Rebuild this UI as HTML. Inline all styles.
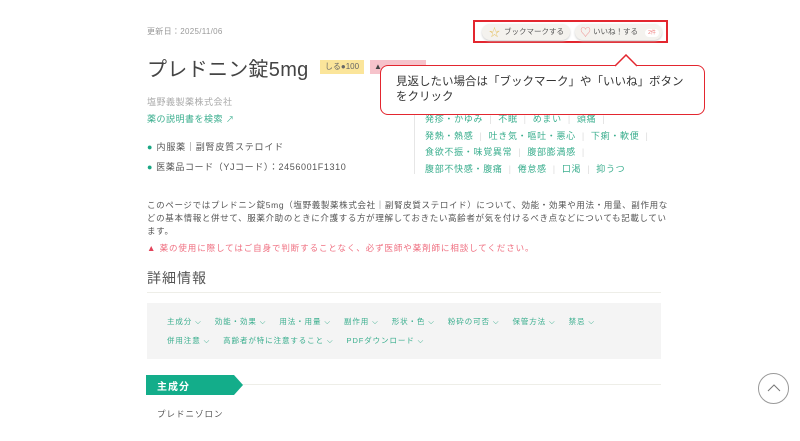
<!DOCTYPE html>
<html><head><meta charset="utf-8"><style>
*{margin:0;padding:0;box-sizing:border-box}
body{width:800px;height:441px;overflow:hidden;background:#fff;font-family:"Liberation Sans","Noto Sans CJK JP",sans-serif;color:#555;position:relative}
.a{position:absolute;white-space:nowrap}
.g{color:#3aae8e}
.sep{color:#ddd;margin:0 6px}
.nav span{margin-right:13px}
</style></head><body>
<div class="a" style="left:147px;top:26px;font-size:8px;color:#999;letter-spacing:.3px">更新日：2025/11/06</div>

<div class="a" style="left:473px;top:20px;width:195px;height:23px;border:2px solid #e3262f"></div>
<div class="a" style="left:482px;top:24px;width:88px;height:16px;border-radius:8px;background:#f4f2ee;box-shadow:0 1px 2px #ccc;font-size:7.5px;line-height:16px;padding-left:22px;color:#555">ブックマークする</div>
<div class="a" style="left:489px;top:24px;font-size:11px;color:#e4c46a">☆</div>
<div class="a" style="left:575px;top:24px;width:87px;height:16px;border-radius:8px;background:#f4f2ee;box-shadow:0 1px 2px #ccc;font-size:7.5px;line-height:16px;padding-left:18px;color:#555">いいね！する <span style="display:inline-block;background:#fff;border-radius:4px;color:#e77;font-size:5px;padding:0 3px;margin-left:5px;line-height:8px">2件</span></div>
<div class="a" style="left:580px;top:24px;font-size:11px;color:#e88">♡</div>

<div class="a" style="left:147px;top:53px;font-size:20px;color:#444;letter-spacing:.3px">プレドニン錠5mg</div>
<div class="a" style="left:320px;top:60px;width:44px;height:14px;background:#fbe59a;font-size:8px;line-height:14px;text-align:center;color:#666">しる●100</div>
<div class="a" style="left:370px;top:60px;width:56px;height:14px;background:#f6c3cb;font-size:8px;line-height:14px;padding-left:4px;color:#444">▲</div>

<div class="a" style="left:147px;top:95px;font-size:9px;color:#aaa;letter-spacing:.5px">塩野義製薬株式会社</div>
<div class="a g" style="left:147px;top:112px;font-size:9px;letter-spacing:.5px">薬の説明書を検索 <span style="font-size:8px">↗</span></div>
<div class="a" style="left:147px;top:140px;font-size:9px;color:#555;letter-spacing:.8px"><span style="color:#1aa784">●</span> 内服薬｜副腎皮質ステロイド</div>
<div class="a" style="left:147px;top:160px;font-size:9px;color:#555;letter-spacing:.6px"><span style="color:#1aa784">●</span> 医薬品コード（YJコード）：2456001F1310</div>

<div class="a" style="left:414px;top:100px;width:1px;height:74px;background:#e6e6e6"></div>
<div class="a g" style="left:425px;top:111px;font-size:9px;line-height:16.5px;letter-spacing:.7px">発疹・かゆみ<span class="sep">|</span>不眠<span class="sep">|</span>めまい<span class="sep">|</span>頭痛<span class="sep">|</span><br>発熱・熱感<span class="sep">|</span>吐き気・嘔吐・悪心<span class="sep">|</span>下痢・軟便<span class="sep">|</span><br>食欲不振・味覚異常<span class="sep">|</span>腹部膨満感<span class="sep">|</span><br>腹部不快感・腹痛<span class="sep">|</span>倦怠感<span class="sep">|</span>口渇<span class="sep">|</span>抑うつ</div>

<div class="a" style="left:380px;top:65px;width:325px;height:50px;background:#fff;border:1.5px solid #e3262f;border-radius:8px"></div>
<svg class="a" style="left:614px;top:54px" width="24" height="13"><path d="M1 12 L12 1 L23 12" fill="#fff" stroke="#e3262f" stroke-width="1.5"/></svg>
<div class="a" style="left:396px;top:75px;font-size:11.5px;line-height:15px;color:#333">見返したい場合は「ブックマーク」や「いいね」ボタン<br>をクリック</div>

<div class="a" style="left:147px;top:199px;font-size:8.5px;line-height:13px;color:#555;white-space:normal;width:522px;letter-spacing:.65px">このページではプレドニン錠5mg（塩野義製薬株式会社｜副腎皮質ステロイド）について、効能・効果や用法・用量、副作用などの基本情報と併せて、服薬介助のときに介護する方が理解しておきたい高齢者が気を付けるべき点などについても記載しています。</div>
<div class="a" style="left:147px;top:242px;font-size:8.5px;color:#ef6f80;letter-spacing:.9px"><span style="color:#e3435a">▲</span> 薬の使用に際してはご自身で判断することなく、必ず医師や薬剤師に相談してください。</div>

<div class="a" style="left:147px;top:268px;font-size:14px;color:#555;letter-spacing:1px">詳細情報</div>
<div class="a" style="left:147px;top:292px;width:514px;height:1px;background:#eeeee8"></div>
<div class="a" style="left:147px;top:303px;width:514px;height:56px;background:#f4f4f4"></div>
<div class="a g nav" style="left:167px;top:312px;font-size:7.5px;line-height:19px;letter-spacing:.9px">
<span>主成分 ⌵</span><span>効能・効果 ⌵</span><span>用法・用量 ⌵</span><span>副作用 ⌵</span><span>形状・色 ⌵</span><span>粉砕の可否 ⌵</span><span>保管方法 ⌵</span><span>禁忌 ⌵</span><br><span>併用注意 ⌵</span><span>高齢者が特に注意すること ⌵</span><span>PDFダウンロード ⌵</span></div>

<div class="a" style="left:147px;top:384px;width:514px;height:1px;background:#eeeee8"></div>
<svg class="a" style="left:146px;top:375px" width="98" height="20"><path d="M0 0 H88 L97 10 L88 20 H0Z" fill="#13ad8a"/></svg>
<div class="a" style="left:157px;top:378px;font-size:10px;font-weight:bold;color:#fff;letter-spacing:1px">主成分</div>
<div class="a" style="left:157px;top:408px;font-size:8.5px;color:#555;letter-spacing:1px">プレドニゾロン</div>

<div class="a" style="left:758px;top:373px;width:31px;height:31px;border:1px solid #999;border-radius:50%;background:#fff"></div>
<svg class="a" style="left:766px;top:383px" width="16" height="10"><path d="M2 8 L8 2 L14 8" fill="none" stroke="#777" stroke-width="1"/></svg>
</body></html>
